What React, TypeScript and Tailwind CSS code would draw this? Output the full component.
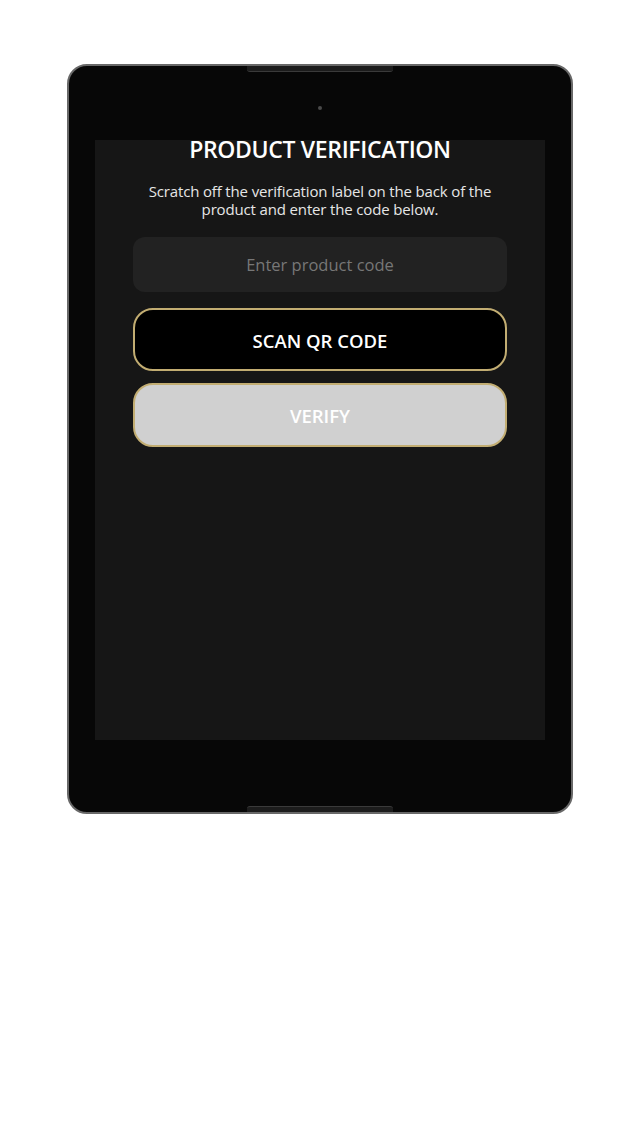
export default function App() {
  return (
    <div className="min-h-[1138px] bg-white pt-[64px]" style={{ fontFamily: '"Open Sans", "Noto Sans", sans-serif' }}>
      {/* tablet frame */}
      <div className="mx-auto flex h-[750px] w-[506px] flex-col items-center rounded-[20px] border-2 border-[#686868] bg-[#070707]">
        {/* top notch */}
        <div className="h-[6px] w-[146px] rounded-b-[3px] border-b border-[#3a3a3a] bg-[#1c1c1c]" />
        {/* camera */}
        <div className="mt-[34px] h-[4px] w-[4px] rounded-full bg-[#4a4a4a]" />
        {/* screen */}
        <div className="mt-[30px] flex h-[600px] w-[450px] flex-col items-center bg-[#161616]">
          <h1 className="-mt-[2px] text-[23px] font-semibold leading-none tracking-[-0.015em] text-white">
            PRODUCT VERIFICATION
          </h1>
          <p className="mt-[21px] w-[372px] text-center text-[15px] leading-[18px] tracking-[-0.01em] text-[#e6e6e6]">
            Scratch off the verification label on the back of the product and enter the code below.
          </p>
          <div className="mt-[19px] flex w-[374px] flex-col">
            <input
              type="text"
              placeholder="Enter product code"
              className="h-[55px] w-full rounded-[12px] bg-[#222222] text-center text-[16.5px] text-white outline-none placeholder:text-[#777777]"
            />
            <button className="mt-[16px] h-[63px] w-full rounded-[20px] border-2 border-[#c2ad72] bg-black pt-[3px] text-[18.5px] font-semibold text-white">
              SCAN QR CODE
            </button>
            <button className="mt-[12px] h-[64px] w-full rounded-[20px] border-2 border-[#c2ad72] bg-[#d0d0d0] pt-[2px] text-[18.5px] font-semibold text-white">
              VERIFY
            </button>
          </div>
        </div>
        {/* bottom notch */}
        <div className="mt-auto h-[6px] w-[146px] rounded-t-[3px] border-t border-[#3a3a3a] bg-[#1c1c1c]" />
      </div>
    </div>
  );
}
